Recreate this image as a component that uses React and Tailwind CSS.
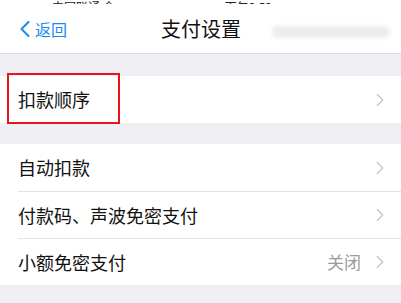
import { ChevronLeft, ChevronRight } from 'lucide-react'

const font = { fontFamily: '"Noto Sans CJK SC", "Noto Sans", sans-serif' }

function Row({ label, value, first }) {
  return (
    <div className="flex h-[47px] items-center pl-[18px]">
      <div className={`flex h-full flex-1 items-center pr-[10px] ${first ? '' : 'border-t border-[#e3e3e6]'}`}>
        <span className="flex-1 text-[18px] text-[#111]">{label}</span>
        {value && <span className="mr-[8px] text-[17px] text-[#9b9b9b]">{value}</span>}
        <ChevronRight className="h-[22px] w-[22px] text-[#c4c4c8]" strokeWidth={1.3} />
      </div>
    </div>
  )
}

export default function App() {
  return (
    <div className="h-[303px] w-[401px] overflow-hidden bg-[#efeff4]" style={font}>
      <div className="bg-white">
        <div className="flex h-[4px] items-end overflow-hidden px-[52px] text-[12px] leading-none text-[#222]">
          <span className="translate-y-[9px]">中国联通 令</span>
          <span className="ml-[110px] translate-y-[9px]">下午3:52</span>
        </div>
        <div className="relative flex h-[50px] items-center border-b border-[#d9d9dc]">
          <div className="flex items-center pl-[11px] text-[16px] text-[#1a8cf0]">
            <ChevronLeft className="h-[28px] w-[28px] -mr-[4px]" strokeWidth={1.8} />
            <span>返回</span>
          </div>
          <div className="absolute left-[161px] text-[20px] text-[#111]">支付设置</div>
          <div className="absolute left-[272px] top-[22px] h-[12px] w-[118px] rounded-full bg-[#ececf0] blur-[2px]" />
        </div>
      </div>

      <div className="mt-[22px] bg-white">
        <div className="relative">
          <Row label="扣款顺序" first />
          <div className="absolute left-[7px] top-[-3px] h-[51px] w-[113px] border-2 border-[#e8141b]" />
        </div>
      </div>

      <div className="mt-[21px] bg-white">
        <Row label="自动扣款" first />
        <Row label="付款码、声波免密支付" />
        <Row label="小额免密支付" value="关闭" />
      </div>
    </div>
  )
}
